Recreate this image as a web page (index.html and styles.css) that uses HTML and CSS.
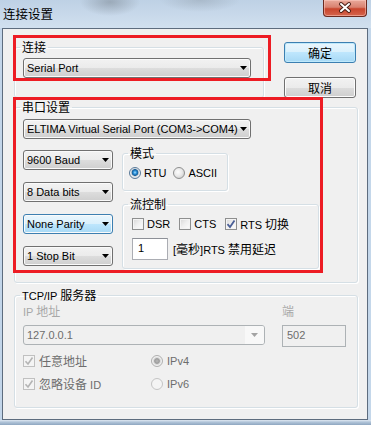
FILE: index.html
```html
<!DOCTYPE html>
<html lang="zh">
<head>
    <meta charset="UTF-8">
    <title>连接设置</title>
    <link rel="stylesheet" href="styles.css">
</head>
<body>
    <div class="window">
        <div class="titlebar">
            <span class="title zh">连接设置</span>
            <div class="close">
                <svg width="44" height="17" viewBox="0 0 44 17">
                    <path d="M18 5 L26 12 M26 5 L18 12" stroke="#4a1f17" stroke-width="4" stroke-linecap="round"/>
                    <path d="M18 5 L26 12 M26 5 L18 12" stroke="#ffffff" stroke-width="2" stroke-linecap="round"/>
                </svg>
            </div>
        </div>
        <div class="client">
            <div class="top-row">
                <fieldset class="group g-conn">
                    <legend><span class="zh">连接</span></legend>
                    <div class="combo w-wide"><span>Serial Port</span><svg class="arrow" width="7" height="4"><path d="M0 0h7L3.5 4z"/></svg></div>
                </fieldset>
                <div class="buttons">
                    <div class="btn btn-default"><span class="zh">确定</span></div>
                    <div class="btn"><span class="zh">取消</span></div>
                </div>
            </div>

            <fieldset class="group g-serial">
                <legend><span class="zh">串口设置</span></legend>
                <div class="combo w-wide"><span>ELTIMA Virtual Serial Port (COM3-&gt;COM4)</span><svg class="arrow" width="7" height="4"><path d="M0 0h7L3.5 4z"/></svg></div>
                <div class="serial-row">
                    <div class="combo-col">
                        <div class="combo w-small"><span>9600 Baud</span><svg class="arrow" width="7" height="4"><path d="M0 0h7L3.5 4z"/></svg></div>
                        <div class="combo w-small"><span>8 Data bits</span><svg class="arrow" width="7" height="4"><path d="M0 0h7L3.5 4z"/></svg></div>
                        <div class="combo w-small combo-hot"><span>None Parity</span><svg class="arrow" width="7" height="4"><path d="M0 0h7L3.5 4z"/></svg></div>
                        <div class="combo w-small"><span>1 Stop Bit</span><svg class="arrow" width="7" height="4"><path d="M0 0h7L3.5 4z"/></svg></div>
                    </div>
                    <div class="side-col">
                        <fieldset class="group g-mode">
                            <legend><span class="zh">模式</span></legend>
                            <div class="opt-row">
                                <span class="opt"><span class="radio radio-on"></span><span>RTU</span></span>
                                <span class="opt"><span class="radio"></span><span>ASCII</span></span>
                            </div>
                        </fieldset>
                        <fieldset class="group g-flow">
                            <legend><span class="zh">流控制</span></legend>
                            <div class="opt-row flow-checks">
                                <span class="opt"><span class="check"></span><span>DSR</span></span>
                                <span class="opt"><span class="check"></span><span>CTS</span></span>
                                <span class="opt"><span class="check check-on"><svg width="10" height="10" viewBox="0 0 10 10"><path d="M1.5 5.2 L4 8 L8.5 1.5" fill="none" stroke="#4a5f97" stroke-width="1.8"/></svg></span><span>RTS <span class="zh">切换</span></span></span>
                            </div>
                            <div class="delay-row">
                                <div class="edit">1</div>
                                <span>[<span class="zh">毫秒</span>]RTS <span class="zh">禁用延迟</span></span>
                            </div>
                        </fieldset>
                    </div>
                </div>
            </fieldset>

            <fieldset class="group g-tcp">
                <legend>TCP/IP <span class="zh">服务器</span></legend>
                <div class="ip-row">
                    <div class="ip-col">
                        <div class="lbl-dis">IP <span class="zh">地址</span></div>
                        <div class="combo combo-dis"><span>127.0.0.1</span><span class="dis-btn"><svg class="arrow" width="7" height="4"><path d="M0 0h7L3.5 4z"/></svg></span></div>
                    </div>
                    <div class="port-col">
                        <div class="lbl-dis"><span class="zh">端</span></div>
                        <div class="edit edit-dis">502</div>
                    </div>
                </div>
                <div class="tcp-opts">
                    <span class="opt opt-dis"><span class="check check-dis"><svg width="10" height="10" viewBox="0 0 10 10"><path d="M1.5 5.2 L4 8 L8.5 1.5" fill="none" stroke="#b4b4b4" stroke-width="1.6"/></svg></span><span class="zh">任意地址</span></span>
                    <span class="opt opt-dis"><span class="radio radio-dis-on"></span><span>IPv4</span></span>
                    <span class="opt opt-dis"><span class="check check-dis"><svg width="10" height="10" viewBox="0 0 10 10"><path d="M1.5 5.2 L4 8 L8.5 1.5" fill="none" stroke="#b4b4b4" stroke-width="1.6"/></svg></span><span><span class="zh">忽略设备</span> ID</span></span>
                    <span class="opt opt-dis"><span class="radio radio-dis"></span><span>IPv6</span></span>
                </div>
            </fieldset>
        </div>
        <div class="frame-bottom"></div>

        <div class="mark mark-conn"></div>
        <div class="mark mark-serial"></div>
    </div>
</body>
</html>
```

FILE: styles.css
```css
body {
    margin: 0;
    font-family: "Liberation Sans", "Noto Sans CJK SC", sans-serif;
    font-size: 11px;
    line-height: 14px;
    color: #000;
    background: #c6d8ea;
}
.zh {
    font-family: "Noto Sans CJK SC", sans-serif;
    font-size: 12px;
}
.window {
    position: relative;
    width: 371px;
    height: 425px;
    overflow: hidden;
    background: linear-gradient(90deg, #c2d5e9, #cbdcee 60%, #c4d7ea);
}
.titlebar {
    height: 28px;
    display: flex;
    justify-content: space-between;
    align-items: flex-start;
    padding: 0 4px 0 3px;
    box-sizing: border-box;
    background:
        radial-gradient(ellipse 30px 14px at 110px 2px, rgba(110, 120, 130, 0.45), rgba(110, 120, 130, 0)),
        radial-gradient(ellipse 40px 12px at 200px 0, rgba(120, 130, 140, 0.3), rgba(120, 130, 140, 0)),
        linear-gradient(180deg, #bed1e5, #d1e0ef);
}
.title {
    margin-top: 6px;
    line-height: 15px;
    font-size: 12.5px;
    color: #000;
}
.close {
    width: 44px;
    height: 17px;
    margin-top: 0;
    box-sizing: border-box;
    border: 1px solid #6b2a20;
    border-top: none;
    border-radius: 0 0 4px 4px;
    background: linear-gradient(180deg, #e9a99b 0, #d98270 45%, #c9452d 55%, #d5654d 100%);
    box-shadow: inset 0 0 0 1px rgba(255, 210, 200, 0.5);
}
.close svg {
    display: block;
    margin: -1px 0 0 -1px;
}
.client {
    margin: 0 4px 0 2px;
    width: 366px;
    box-sizing: border-box;
    border: 1px solid #5d6c7e;
    background: #f0f0f0;
    padding: 11px 9px 11px 11px;
}
.frame-bottom {
    height: 9px;
    background: linear-gradient(180deg, #dfe8f2 0, #b3c6da 2px, #8ea6c0 5px, #7e97b2 100%);
}
.group {
    margin: 0;
    padding: 0 8px;
    min-width: 0;
    border: 1px solid #d5dfe5;
    border-radius: 3px;
    box-shadow: inset 1px 1px 0 #fff, 1px 1px 0 #fff;
}
.group legend {
    padding: 0 2px;
    margin-left: -3px;
    line-height: 14px;
}
.top-row {
    display: flex;
}
.g-conn {
    width: 250px;
    box-sizing: border-box;
    padding: 3px 12px 10px 8px;
}
.buttons {
    display: flex;
    flex-direction: column;
    gap: 14px;
    margin-left: 20px;
    padding-top: 2px;
}
.btn {
    width: 72px;
    height: 21px;
    box-sizing: border-box;
    border: 1px solid #707070;
    border-radius: 3px;
    background: linear-gradient(180deg, #f2f2f2 0, #ebebeb 50%, #dddddd 50%, #cfcfcf 100%);
    box-shadow: inset 0 0 0 1px #fcfcfc;
    display: flex;
    align-items: center;
    justify-content: center;
}
.btn-default {
    border-color: #3c7fb1;
    background: linear-gradient(180deg, #eaf6fd 0, #d9f0fc 50%, #bee6fd 50%, #a7d9f5 100%);
    box-shadow: inset 0 0 0 1px #bfe9fb;
}
.combo {
    height: 20px;
    box-sizing: border-box;
    border: 1px solid #707070;
    border-radius: 3px;
    background: linear-gradient(180deg, #f2f2f2 0, #ebebeb 50%, #dddddd 50%, #cfcfcf 100%);
    box-shadow: inset 0 0 0 1px #fafafa;
    display: flex;
    align-items: center;
    justify-content: space-between;
    padding: 0 3px 0 3px;
    white-space: nowrap;
}
.arrow {
    display: block;
    fill: #000;
}
.w-wide {
    width: 228px;
}
.w-small {
    width: 90px;
}
.combo-hot {
    border-color: #3c7fb1;
    background: linear-gradient(180deg, #eaf6fd 0, #d9f0fc 50%, #bee6fd 50%, #a7d9f5 100%);
}
.g-serial {
    margin-top: 2px;
    padding: 4px 8px 13px 8px;
}
.serial-row {
    display: flex;
    margin-top: 7px;
}
.combo-col {
    display: flex;
    flex-direction: column;
    gap: 12px;
    padding-top: 4px;
    width: 90px;
}
.side-col {
    margin-left: 9px;
    width: 197px;
}
.g-mode {
    width: 106px;
    box-sizing: border-box;
    padding: 5px 6px 10px 6px;
}
.g-mode legend {
    margin-left: -1px;
}
.g-flow {
    margin-top: 6px;
    padding: 5px 8px 8px 9px;
}
.g-flow legend {
    margin-left: -4px;
}
.opt-row {
    display: flex;
    align-items: center;
    height: 14px;
    gap: 7px;
}
.flow-checks {
    gap: 9px;
}
.opt {
    display: inline-flex;
    align-items: center;
    gap: 3px;
    height: 14px;
    white-space: nowrap;
}
.radio {
    width: 12px;
    height: 12px;
    box-sizing: border-box;
    border-radius: 50%;
    border: 1px solid #8e8f8f;
    background: radial-gradient(circle at 40% 40%, #fdfdfd 0, #e9e9e9 4px, #d6d6d6 6px);
}
.radio-on {
    border-color: #5a7a99;
    background: radial-gradient(circle at 50% 45%, #a6e1ff 0, #2b8fd8 1.6px, #145d98 3px, #b8c4cf 3.6px, #eef0f2 4.5px, #d8dcdf 6px);
}
.radio-dis {
    border-color: #c4c4c4;
    background: #f4f4f4;
}
.radio-dis-on {
    border-color: #b0b0b0;
    background: radial-gradient(circle, #b8b8b8 0, #9c9c9c 2.4px, #d4d4d4 3.2px, #f2f2f2 4.5px, #e6e6e6 6px);
}
.check {
    width: 12px;
    height: 12px;
    box-sizing: border-box;
    border: 1px solid #8e8f8f;
    background: linear-gradient(135deg, #d7d7d7 0, #f0f0f0 50%, #fdfdfd 100%);
    box-shadow: inset 0 0 0 1px #f4f4f4;
    display: flex;
    align-items: center;
    justify-content: center;
}
.check-on svg,
.check-dis svg {
    display: block;
}
.check-dis {
    border-color: #c0c0c0;
    background: #f4f4f4;
    box-shadow: none;
}
.delay-row {
    display: flex;
    align-items: center;
    margin-top: 7px;
    gap: 5px;
}
.edit {
    width: 36px;
    height: 22px;
    box-sizing: border-box;
    border: 1px solid #abadb3;
    border-top-color: #8d9097;
    background: #fff;
    padding: 2px 0 0 5px;
    line-height: 14px;
}
.g-tcp {
    margin-top: 5px;
    padding: 1px 8px 16px 8px;
}
.ip-row {
    display: flex;
}
.ip-col {
    width: 242px;
}
.port-col {
    margin-left: 17px;
}
.lbl-dis {
    color: #a8a8a8;
    height: 14px;
    margin-bottom: 7px;
}
.combo-dis {
    width: 242px;
    border-color: #adb2b5;
    background: #f0f0f0;
    box-shadow: none;
    color: #6d6d6d;
    padding-right: 0;
}
.dis-btn {
    width: 19px;
    height: 18px;
    background: #f8f8f8;
    display: flex;
    align-items: center;
    justify-content: center;
    border-radius: 0 2px 2px 0;
}
.combo-dis .arrow {
    fill: #a3a3a3;
}
.edit-dis {
    width: 64px;
    border-color: #adb2b5;
    background: #f0f0f0;
    color: #6d6d6d;
    padding-left: 4px;
}
.tcp-opts {
    display: grid;
    grid-template-columns: 128px auto;
    row-gap: 9px;
    margin-top: 7px;
}
.opt-dis {
    color: #6d6d6d;
    gap: 4px;
}
.mark {
    position: absolute;
    box-sizing: border-box;
    border: 3px solid #ed1c24;
}
.mark-conn {
    left: 13px;
    top: 35px;
    width: 258px;
    height: 46px;
}
.mark-serial {
    left: 13px;
    top: 97px;
    width: 310px;
    height: 176px;
}
```
